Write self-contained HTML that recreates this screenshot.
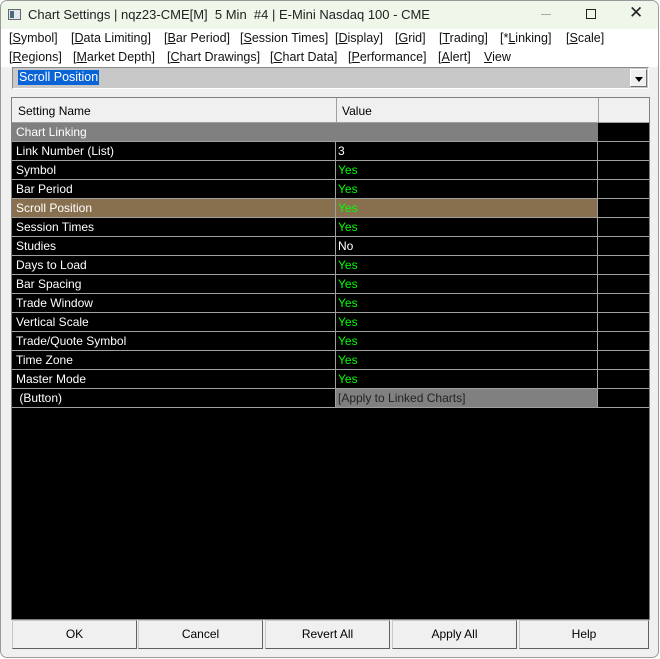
<!DOCTYPE html>
<html><head><style>
*{margin:0;padding:0;box-sizing:border-box}
body{width:660px;height:659px;background:#fff;font-family:"Liberation Sans",sans-serif;position:relative;overflow:hidden}
.win{position:absolute;left:0;top:0;width:659px;height:658px;background:#f0f0f0;border:1px solid #9a9a9a;border-radius:7px;overflow:hidden}
.title{position:absolute;left:0;top:0;width:100%;height:28px;background:#eef7e9;font-size:13px;color:#222}
.menu{position:absolute;left:0;top:28px;width:100%;height:38px;background:#fff;font-size:12.5px;color:#111}
.menu span{position:absolute;white-space:nowrap}
u{text-decoration:underline}
.abs{position:absolute}
.row{position:absolute;left:11px;width:637px;height:19px;font-size:12px;color:#fff;border-bottom:1px solid #a0a0a0}
.row div{position:absolute;top:0;height:18px;line-height:18px;white-space:nowrap}
.c1{left:0;width:324px;padding-left:4px;border-right:1px solid #a0a0a0}
.c2{left:324px;width:262px;padding-left:2px;border-right:1px solid #a0a0a0}
.c3{left:586px;width:51px}
.g{color:#00ff00}
.btn{position:absolute;top:619px;height:29px;width:125px;background:#f0f0f0;border:1px solid #c8c8c8;border-right-color:#606060;border-bottom-color:#606060;font-size:12px;text-align:center;line-height:27px;color:#000}
</style></head><body>
<div class="win">
<div class="title">
 <div class="abs" style="left:7px;top:8px;width:13px;height:11px;border:1px solid #666;background:#dfe8ef"><div class="abs" style="left:1px;top:1px;width:4px;height:7px;background:#4a6a7a"></div></div>
 <div class="abs" style="left:27px;top:6px;white-space:nowrap">Chart Settings | nqz23-CME[M]&nbsp; 5 Min&nbsp; #4 | E-Mini Nasdaq 100 - CME</div>
 <div class="abs" style="left:540px;top:13px;width:10px;height:1px;background:#aaa"></div>
 <div class="abs" style="left:585px;top:8px;width:10px;height:10px;border:1px solid #222"></div>
 <div class="abs" style="left:628px;top:2px;font-size:17px">✕</div>
</div>
<div class="menu">
 <span style="left:8px;top:2px">[<u>S</u>ymbol]</span>
 <span style="left:70px;top:2px">[<u>D</u>ata Limiting]</span>
 <span style="left:163px;top:2px">[<u>B</u>ar Period]</span>
 <span style="left:239px;top:2px">[<u>S</u>ession Times]</span>
 <span style="left:334px;top:2px">[<u>D</u>isplay]</span>
 <span style="left:394px;top:2px">[<u>G</u>rid]</span>
 <span style="left:438px;top:2px">[<u>T</u>rading]</span>
 <span style="left:499px;top:2px">[*<u>L</u>inking]</span>
 <span style="left:565px;top:2px">[<u>S</u>cale]</span>
 <span style="left:8px;top:21px">[<u>R</u>egions]</span>
 <span style="left:72px;top:21px">[<u>M</u>arket Depth]</span>
 <span style="left:166px;top:21px">[<u>C</u>hart Drawings]</span>
 <span style="left:269px;top:21px">[<u>C</u>hart Data]</span>
 <span style="left:347px;top:21px">[<u>P</u>erformance]</span>
 <span style="left:437px;top:21px">[<u>A</u>lert]</span>
 <span style="left:483px;top:21px"><u>V</u>iew</span>
</div>
<div class="abs" style="left:11px;top:66px;width:637px;height:22px;border:1px solid #8a8a8a;border-right-color:#fff;border-bottom-color:#fff;background:#c8c8c8">
 <div class="abs" style="left:5px;top:2px;height:15px;background:#0a64d8;color:#fff;font-size:12.5px;line-height:15px;padding:0 1px">Scroll Position</div>
 <div class="abs" style="right:1px;top:1px;width:17px;height:18px;background:#f0f0f0;border:1px solid #fff;border-right-color:#707070;border-bottom-color:#707070"><div class="abs" style="left:4px;top:7px;width:0;height:0;border-left:4px solid transparent;border-right:4px solid transparent;border-top:5px solid #000"></div></div>
</div>
<div class="abs" style="left:10px;top:96px;width:639px;height:523px;background:#000;border:1px solid #808080"></div>
<div class="abs" style="left:11px;top:97px;width:637px;height:25px;background:#f0f0f0;font-size:12px;color:#000;border-bottom:1px solid #a0a0a0">
 <div class="abs" style="left:6px;top:6px">Setting Name</div>
 <div class="abs" style="left:324px;top:0;width:1px;height:25px;background:#a0a0a0"></div>
 <div class="abs" style="left:330px;top:6px">Value</div>
 <div class="abs" style="left:586px;top:0;width:1px;height:25px;background:#a0a0a0"></div>
</div>
<div class="row" style="top:122px"><div class="c1" style="width:586px;background:#808080;border-right:none">Chart Linking</div><div class="c3"></div></div>
<div class="row" style="top:141px"><div class="c1">Link Number (List)</div><div class="c2">3</div><div class="c3"></div></div>
<div class="row" style="top:160px"><div class="c1">Symbol</div><div class="c2 g">Yes</div><div class="c3"></div></div>
<div class="row" style="top:179px"><div class="c1">Bar Period</div><div class="c2 g">Yes</div><div class="c3"></div></div>
<div class="row" style="top:198px"><div class="c1" style="background:#88704e">Scroll Position</div><div class="c2 g" style="background:#88704e">Yes</div><div class="c3"></div></div>
<div class="row" style="top:217px"><div class="c1">Session Times</div><div class="c2 g">Yes</div><div class="c3"></div></div>
<div class="row" style="top:236px"><div class="c1">Studies</div><div class="c2">No</div><div class="c3"></div></div>
<div class="row" style="top:255px"><div class="c1">Days to Load</div><div class="c2 g">Yes</div><div class="c3"></div></div>
<div class="row" style="top:274px"><div class="c1">Bar Spacing</div><div class="c2 g">Yes</div><div class="c3"></div></div>
<div class="row" style="top:293px"><div class="c1">Trade Window</div><div class="c2 g">Yes</div><div class="c3"></div></div>
<div class="row" style="top:312px"><div class="c1">Vertical Scale</div><div class="c2 g">Yes</div><div class="c3"></div></div>
<div class="row" style="top:331px"><div class="c1">Trade/Quote Symbol</div><div class="c2 g">Yes</div><div class="c3"></div></div>
<div class="row" style="top:350px"><div class="c1">Time Zone</div><div class="c2 g">Yes</div><div class="c3"></div></div>
<div class="row" style="top:369px"><div class="c1">Master Mode</div><div class="c2 g">Yes</div><div class="c3"></div></div>
<div class="row" style="top:388px"><div class="c1">&nbsp;(Button)</div><div class="c2" style="background:#808080;color:#222">[Apply to Linked Charts]</div><div class="c3"></div></div>
<div class="btn" style="left:11px">OK</div>
<div class="btn" style="left:137px">Cancel</div>
<div class="btn" style="left:264px">Revert All</div>
<div class="btn" style="left:391px">Apply All</div>
<div class="btn" style="left:518px;width:130px">Help</div>
</div>
</body></html>
